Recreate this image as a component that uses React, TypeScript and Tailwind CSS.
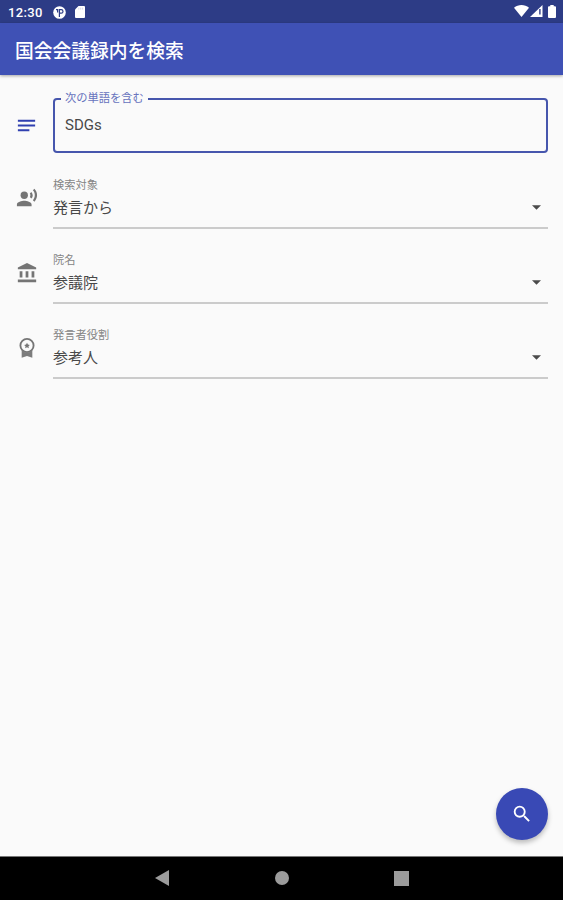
import type { ReactNode } from "react";
import { MdAccountBalance, MdNotes, MdRecordVoiceOver, MdSearch } from "react-icons/md";

function StatusBar() {
  return (
    <div className="flex h-[23px] shrink-0 items-center bg-[#2d3c86] pl-[8px] pr-[7px] text-white">
      <span className="w-[45px] pt-[1px] font-[Roboto,sans-serif] text-[13px] font-medium leading-none tracking-[0.35px]">12:30</span>
      <svg className="mt-px h-[13px] w-[13px]" viewBox="0 0 13 13">
        <circle cx="6.5" cy="6.5" r="6.3" fill="white" />
        <path d="M6.4 11V3.6h1.8a1.7 1.7 0 0 1 0 3.6H6.4M3 3.6h1.6v3" fill="none" stroke="#2d3c86" strokeWidth="1.2" />
      </svg>
      <svg className="ml-[9px] h-[12px] w-[10px]" viewBox="0 0 10 12">
        <path d="M3.5 0H9a1 1 0 0 1 1 1v10a1 1 0 0 1-1 1H1a1 1 0 0 1-1-1V3.5z" fill="white" />
        <path d="M3.8 1.6v2M5.7 1.6v2M7.6 1.6v2" stroke="#c4c9e2" strokeWidth=".7" />
      </svg>
      <div className="grow" />
      <svg className="mt-[-1px] h-[12px] w-[15px]" viewBox="0 0 15 12">
        <path d="M0 2.8C4.2-.8 10.8-.8 15 2.8L7.5 12z" fill="white" />
      </svg>
      <svg className="ml-px mt-[-1px] h-[12px] w-[13px]" viewBox="0 0 13 12">
        <path d="M0 12L12.5 0v12z" fill="white" />
        <path d="M9.9 4v5.5" stroke="#2d3c86" strokeWidth="1.4" />
      </svg>
      <svg className="ml-[5px] mt-[-1px] h-[13px] w-[8px]" viewBox="0 0 8 13">
        <path d="M2.3 0h3.4v1.3H7a1 1 0 0 1 1 1V12a1 1 0 0 1-1 1H1a1 1 0 0 1-1-1V2.3a1 1 0 0 1 1-1h1.3z" fill="white" />
      </svg>
    </div>
  );
}

function MedalIcon() {
  return (
    <svg className="h-[22px] w-[22px]" viewBox="0 0 24 24" fill="none" stroke="#757575">
      <circle cx="12" cy="9.3" r="7.2" strokeWidth="2" />
      <path d="M6.2 14.5l3.3 2h5l3.3-2v8L12 20.8l-5.8 1.7z" fill="#7c7c7c" stroke="none" />
      <path d="M12 6.3l1 2 2.1.3-1.5 1.5.4 2.2-2-1.1-2 1.1.4-2.2-1.5-1.5 2.1-.3z" fill="#757575" stroke="none" />
    </svg>
  );
}

function SelectRow({ icon, label, value }: { icon: ReactNode; label: string; value: string }) {
  return (
    <div className="flex h-[75px]">
      <div className="flex w-[38px] shrink-0 justify-start pl-px pt-[12px] text-[#757575]">{icon}</div>
      <div className="h-[54px] grow border-b-2 border-[#cbcbcb]">
        <div className="pt-[3px] text-[11.25px] leading-[16px] text-[#858585]">{label}</div>
        <div className="flex h-[28px] items-center justify-between text-[15px] text-[#484848]">
          <span>{value}</span>
          <svg className="mb-[2px] mr-[7px] h-[5px] w-[9px]" viewBox="0 0 10 5">
            <path d="M0 0h10L5 5z" fill="#4a4a4a" />
          </svg>
        </div>
      </div>
    </div>
  );
}

export default function App() {
  return (
    <div className="flex h-[900px] w-[563px] flex-col overflow-hidden bg-[#fafafa] font-[Roboto,'Noto_Sans_CJK_JP',sans-serif]">
      <StatusBar />
      <header className="z-10 flex h-[52px] shrink-0 items-center bg-[#3f51b5] pl-[15px] pt-[7px] text-[18.75px] font-medium text-white shadow-[0_1px_3px_rgba(0,0,0,0.35)]">
        国会会議録内を検索
      </header>
      <main className="flex grow flex-col px-[15px] pt-[16px]">
        <div className="flex h-[84px]">
          <div className="w-[38px] shrink-0 pt-[23px] text-[#3040b0]">
            <MdNotes size={23} />
          </div>
          <fieldset className="h-[62px] min-w-0 grow rounded-[4px] border-2 border-[#4656ad] pl-[6px]">
            <legend className="px-[4px] text-[11.25px] leading-[16px] text-[#6672bd]">次の単語を含む</legend>
            <div className="pl-[4px] pt-[6px] text-[15px] leading-[24px] text-[#484848]">SDGs</div>
          </fieldset>
        </div>
        <SelectRow icon={<MdRecordVoiceOver size={22} />} label="検索対象" value="発言から" />
        <SelectRow icon={<MdAccountBalance size={22} />} label="院名" value="参議院" />
        <SelectRow icon={<MedalIcon />} label="発言者役割" value="参考人" />
        <button className="mb-[16px] mt-auto flex h-[52px] w-[52px] items-center justify-center self-end rounded-full bg-[#3949b5] text-white shadow-[0_3px_5px_rgba(0,0,0,0.25)]">
          <MdSearch size={22} />
        </button>
      </main>
      <nav className="flex h-[44px] shrink-0 items-center justify-center gap-[105px] border-t border-[#777] bg-black pb-px">
        <svg className="h-[16px] w-[15px]" viewBox="0 0 15 16">
          <path d="M0 8L14 0v16z" fill="#9b9b9b" />
        </svg>
        <div className="h-[14px] w-[14px] rounded-full bg-[#9b9b9b]" />
        <div className="h-[15px] w-[15px] bg-[#9b9b9b]" />
      </nav>
    </div>
  );
}
